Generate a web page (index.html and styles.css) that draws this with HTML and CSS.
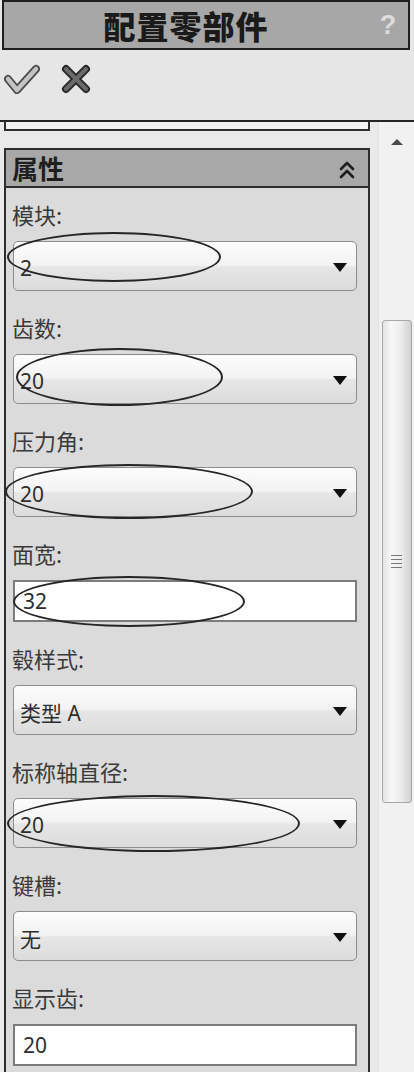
FILE: index.html
```html
<!DOCTYPE html>
<html lang="zh-CN">
<head>
<meta charset="utf-8">
<title>配置零部件</title>
<link rel="stylesheet" href="styles.css">
</head>
<body>
<div class="window">
  <header class="titlebar">
    <div class="title-box">
      <span class="title">配置零部件</span>
      <span class="help">?</span>
    </div>
  </header>
  <div class="toolbar">
    <svg class="icon-ok" width="36" height="30" viewBox="0 0 36 30">
      <path d="M4 15 L13 26 L32 5" fill="none" stroke="#4a4a4a" stroke-width="8" stroke-linecap="round" stroke-linejoin="round"/>
      <path d="M4 15 L13 26 L32 5" fill="none" stroke="#c4c4c4" stroke-width="4.5" stroke-linecap="round" stroke-linejoin="round"/>
    </svg>
    <svg class="icon-cancel" width="32" height="30" viewBox="0 0 32 30">
      <path d="M6 5 L26 25 M26 5 L6 25" fill="none" stroke="#2a2a2a" stroke-width="8" stroke-linecap="round"/>
      <path d="M6 5 L26 25 M26 5 L6 25" fill="none" stroke="#6a6a6a" stroke-width="4" stroke-linecap="round"/>
    </svg>
  </div>
  <div class="workspace">
    <div class="main">
      <div class="prev-group"></div>
      <section class="group">
        <div class="group-head">
          <span class="group-title">属性</span>
          <svg class="collapse" width="18" height="20" viewBox="0 0 18 20">
            <path d="M3 9 L9 3 L15 9 M3 17 L9 11 L15 17" fill="none" stroke="#1e1e1e" stroke-width="2.6" stroke-linecap="round" stroke-linejoin="round"/>
          </svg>
        </div>
        <div class="group-body">
          <div class="field">
            <div class="label">模块:</div>
            <div class="control select"><span class="value">2</span><i class="arrow"></i><div class="oval oval-1"></div></div>
          </div>
          <div class="field">
            <div class="label">齿数:</div>
            <div class="control select"><span class="value">20</span><i class="arrow"></i><div class="oval oval-2"></div></div>
          </div>
          <div class="field">
            <div class="label">压力角:</div>
            <div class="control select"><span class="value">20</span><i class="arrow"></i><div class="oval oval-3"></div></div>
          </div>
          <div class="field">
            <div class="label">面宽:</div>
            <div class="control input"><span class="value">32</span><div class="oval oval-4"></div></div>
          </div>
          <div class="field">
            <div class="label">毂样式:</div>
            <div class="control select"><span class="value">类型 A</span><i class="arrow"></i></div>
          </div>
          <div class="field">
            <div class="label">标称轴直径:</div>
            <div class="control select"><span class="value">20</span><i class="arrow"></i><div class="oval oval-6"></div></div>
          </div>
          <div class="field">
            <div class="label">键槽:</div>
            <div class="control select"><span class="value">无</span><i class="arrow"></i></div>
          </div>
          <div class="field">
            <div class="label">显示齿:</div>
            <div class="control input"><span class="value">20</span></div>
          </div>
        </div>
      </section>
    </div>
    <aside class="scrollbar">
      <div class="scroll-up"><i class="up-arrow"></i></div>
      <div class="thumb"><div class="grip"><i></i><i></i><i></i><i></i></div></div>
    </aside>
  </div>
</div>
</body>
</html>
```
FILE: styles.css
```css
html, body {
  margin: 0;
  padding: 0;
  height: 1072px;
  overflow: hidden;
  background: #e8e8e8;
}
body {
  font-family: "Noto Sans", "Noto Sans CJK SC", sans-serif;
  color: #2b2b2b;
}
.window {
  width: 414px;
  height: 1072px;
  display: flex;
  flex-direction: column;
  overflow: hidden;
}
.titlebar {
  height: 50px;
  padding: 0 4px 0 2px;
  background: #e6e6e6;
}
.title-box {
  box-sizing: border-box;
  height: 50px;
  border: 2px solid #1f1f1f;
  background: #a7a7a7;
  display: flex;
  align-items: center;
}
.title {
  flex: 1;
  text-align: center;
  font-family: "Noto Sans CJK SC", sans-serif;
  font-weight: 900;
  font-size: 32px;
  line-height: 46px;
  color: #1a1a1a;
  letter-spacing: 1px;
}
.help {
  width: 40px;
  text-align: center;
  font-family: "Liberation Sans", sans-serif;
  font-weight: 700;
  font-size: 27px;
  color: #dcdcdc;
}
.toolbar {
  box-sizing: border-box;
  height: 72px;
  padding: 14px 0 0 4px;
  background: #e6e6e6;
  border-bottom: 2px solid #262626;
  display: flex;
  align-items: flex-start;
  gap: 20px;
}
.workspace {
  flex: 1;
  display: flex;
  min-height: 0;
  overflow: hidden;
}
.main {
  width: 378px;
  background: #eaeaea;
  display: flex;
  flex-direction: column;
  min-height: 0;
}
.prev-group {
  box-sizing: border-box;
  margin-left: 4px;
  width: 366px;
  height: 9px;
  flex: none;
  border: 2px solid #2e2e2e;
  border-top: none;
  background: #f4f4f4;
}
.group {
  margin: 17px 0 0 4px;
  width: 366px;
  flex: 1;
  min-height: 0;
  overflow: hidden;
  box-sizing: border-box;
  border: 2px solid #2e2e2e;
  border-bottom: none;
  background: #dbdbdb;
}
.group-head {
  height: 36px;
  background: #a8a8a8;
  border-bottom: 2px solid #2e2e2e;
  display: flex;
  align-items: center;
  justify-content: space-between;
  padding: 0 12px 0 6px;
}
.group-title {
  font-family: "Noto Sans CJK SC", sans-serif;
  font-weight: 700;
  font-size: 26px;
  line-height: 36px;
  color: #1e1e1e;
}
.collapse {
  margin-top: 3px;
}
.group-body {
  padding: 11px 11px 0 7px;
}
.field {
  margin-bottom: 21px;
}
.label {
  height: 30px;
  line-height: 30px;
  margin-bottom: 12px;
  font-family: "Noto Sans CJK SC", sans-serif;
  font-size: 22px;
  color: #3a3a3a;
  margin-left: -1px;
}
.control {
  position: relative;
  box-sizing: border-box;
  display: flex;
  align-items: center;
}
.select {
  height: 50px;
  border: 1.5px solid #8c8c8c;
  border-radius: 5px;
  background: linear-gradient(#fcfcfc, #f3f3f3 48%, #e6e6e6 52%, #dcdcdc);
  padding: 3px 9px 0 6px;
  justify-content: space-between;
}
.input {
  height: 42px;
  border: 2px solid #7c7c7c;
  background: #ffffff;
  padding: 0 8px;
}
.value {
  font-size: 21px;
  color: #2e2e2e;
  font-family: "Noto Sans", "Noto Sans CJK SC", sans-serif;
}
.arrow {
  width: 0;
  height: 0;
  border-left: 7.5px solid transparent;
  border-right: 7.5px solid transparent;
  border-top: 9px solid #111;
}
.oval {
  position: absolute;
  box-sizing: border-box;
  border: 2px solid #262626;
  border-radius: 50%;
  pointer-events: none;
}
.oval-1 { left: -7px; top: -10px; width: 214px; height: 50px; }
.oval-2 { left: 2px; top: -7px; width: 207px; height: 58px; }
.oval-3 { left: -9px; top: -4px; width: 248px; height: 55px; }
.oval-4 { left: -2px; top: -6px; width: 232px; height: 51px; }
.oval-6 { left: -7px; top: -4px; width: 293px; height: 57px; }
.scrollbar {
  width: 36px;
  background: #f1f1f1;
  border-left: 1px solid #e2e2e2;
  box-sizing: border-box;
  display: flex;
  flex-direction: column;
  align-items: center;
}
.scroll-up {
  height: 40px;
  width: 100%;
  display: flex;
  align-items: center;
  justify-content: center;
}
.up-arrow {
  width: 0;
  height: 0;
  border-left: 6px solid transparent;
  border-right: 6px solid transparent;
  border-bottom: 6px solid #4a4a4a;
}
.thumb {
  margin-top: 158px;
  width: 30px;
  height: 483px;
  box-sizing: border-box;
  border: 1px solid #a8a8a8;
  border-radius: 3px;
  background: linear-gradient(to right, #e4e4e4, #f8f8f8 30%, #ececec 65%, #d0d0d0);
  display: flex;
  align-items: center;
  justify-content: center;
}
.grip {
  display: flex;
  flex-direction: column;
  gap: 3px;
}
.grip i {
  display: block;
  width: 11px;
  height: 1px;
  background: #7a7a7a;
}
```
